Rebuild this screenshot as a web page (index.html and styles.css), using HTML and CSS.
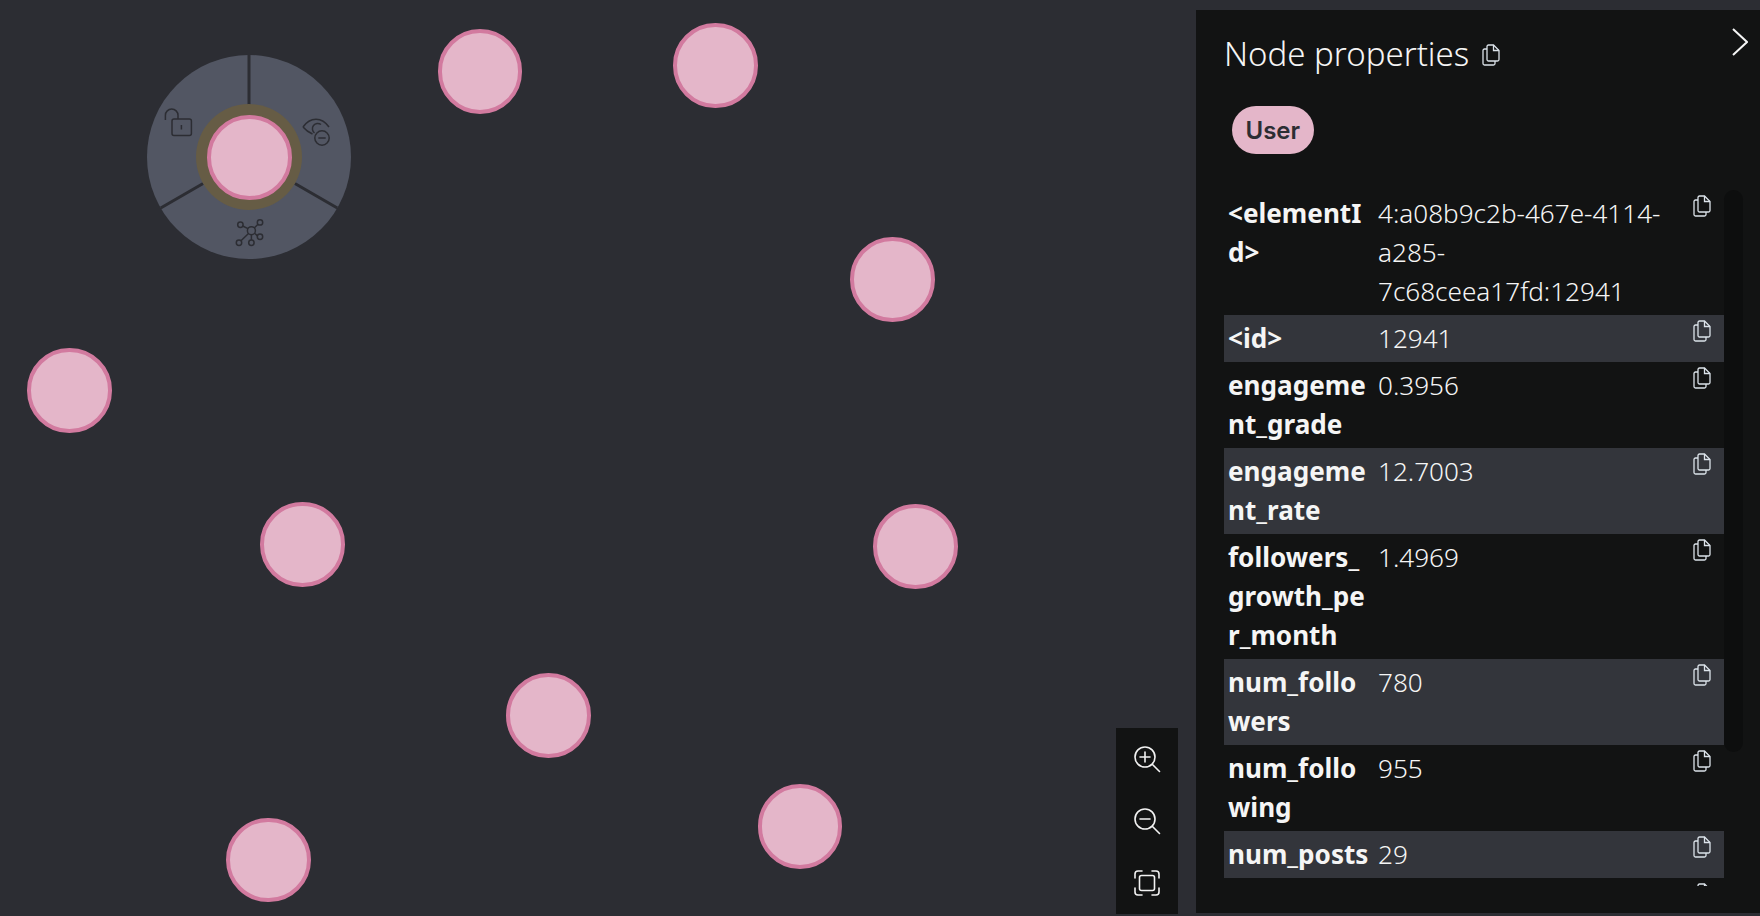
FILE: index.html
```html
<!DOCTYPE html>
<html lang="en">
<head>
    <meta charset="UTF-8">
    <title>Node properties</title>
    <link rel="stylesheet" href="styles.css">
</head>
<body>
    <svg width="0" height="0" class="defs">
        <symbol id="copy" viewBox="0 0 18 22">
            <path d="M6.5 1H11.5L17 6.5V15.5A1.5 1.5 0 0 1 15.5 17H6.5A1.5 1.5 0 0 1 5 15.5V2.5A1.5 1.5 0 0 1 6.5 1Z"/>
            <path d="M11.5 1V6.5H17"/>
            <path d="M5 5H2.5A1.5 1.5 0 0 0 1 6.5V19.5A1.5 1.5 0 0 0 2.5 21H11.5A1.5 1.5 0 0 0 13 19.5V17"/>
        </symbol>
    </svg>

    <main class="canvas">
        <svg class="node-menu" width="204" height="204" viewBox="0 0 204 204">
            <circle class="menu-disc" cx="102" cy="102" r="102"/>
            <path class="menu-split" d="M102 0V52M190.3 153L147.9 128.5M13.7 153L56.1 128.5"/>
            <circle class="menu-ring" cx="102" cy="102" r="53"/>
            <g class="menu-icon">
                <rect x="25" y="64" width="19.4" height="16.4" rx="2"/>
                <path d="M18.4 65V60.3A6.3 6.3 0 0 1 31 60.3V64M34.4 70V74.5"/>
                <path d="M156 72C163 61.5 175 61.5 182 72M156 72C158.5 75 162 77.5 165.5 79"/>
                <path d="M174 69.5A5.3 5.3 0 1 0 167.5 78"/>
                <circle cx="175" cy="83" r="7.2"/>
                <path d="M171.3 83H178.7"/>
                <circle cx="104.4" cy="175.7" r="4"/>
                <circle cx="93.4" cy="169.7" r="2.7"/>
                <circle cx="113" cy="167.4" r="2.7"/>
                <circle cx="113" cy="181.7" r="2.7"/>
                <circle cx="104.4" cy="187.7" r="2.7"/>
                <circle cx="92" cy="187.7" r="2.7"/>
                <path d="M95.7 171L101 173.6M111 169.3L107.2 173M110.4 180.9L108 178.5M104.4 179.7V185M94 185.8L101.5 178.5"/>
            </g>
        </svg>

        <div class="node n1"></div>
        <div class="node n2"></div>
        <div class="node n3"></div>
        <div class="node n4"></div>
        <div class="node n5"></div>
        <div class="node n6"></div>
        <div class="node n7"></div>
        <div class="node n8"></div>
        <div class="node n9"></div>
        <div class="node n10"></div>

        <div class="zoom-bar">
            <button class="zoom-btn" type="button">
                <svg width="28" height="28" viewBox="0 0 28 28"><circle cx="12" cy="12" r="10"/><path d="M19.5 19.5L26.5 26.5M7 12H17M12 7V17"/></svg>
            </button>
            <button class="zoom-btn" type="button">
                <svg width="28" height="28" viewBox="0 0 28 28"><circle cx="12" cy="12" r="10"/><path d="M19.5 19.5L26.5 26.5M7 12H17"/></svg>
            </button>
            <button class="zoom-btn" type="button">
                <svg width="26" height="26" viewBox="0 0 26 26"><rect x="5.5" y="5.5" width="15" height="15" rx="2"/><path d="M1 8V4A3 3 0 0 1 4 1H8M18 1H22A3 3 0 0 1 25 4V8M25 18V22A3 3 0 0 1 22 25H18M8 25H4A3 3 0 0 1 1 22V18"/></svg>
            </button>
        </div>
    </main>

    <aside class="panel">
        <header class="panel-head">
            <h2 class="panel-title">Node properties</h2>
            <svg class="copy copy-title"><use href="#copy"/></svg>
            <svg class="chevron" width="16" height="28" viewBox="0 0 16 28"><path d="M1 1L15 14L1 27"/></svg>
        </header>
        <div class="labels"><span class="chip">User</span></div>

        <div class="props">
            <div class="scroll-track"></div>
            <div class="row"><span class="key">&lt;elementId&gt;</span><span class="val">4:a08b9c2b-467e-4114-a285-7c68ceea17fd:12941</span><svg class="copy"><use href="#copy"/></svg></div>
            <div class="row"><span class="key">&lt;id&gt;</span><span class="val">12941</span><svg class="copy"><use href="#copy"/></svg></div>
            <div class="row"><span class="key">engagement_grade</span><span class="val">0.3956</span><svg class="copy"><use href="#copy"/></svg></div>
            <div class="row"><span class="key">engagement_rate</span><span class="val">12.7003</span><svg class="copy"><use href="#copy"/></svg></div>
            <div class="row"><span class="key">followers_growth_per_month</span><span class="val">1.4969</span><svg class="copy"><use href="#copy"/></svg></div>
            <div class="row"><span class="key">num_followers</span><span class="val">780</span><svg class="copy"><use href="#copy"/></svg></div>
            <div class="row"><span class="key">num_following</span><span class="val">955</span><svg class="copy"><use href="#copy"/></svg></div>
            <div class="row"><span class="key">num_posts</span><span class="val">29</span><svg class="copy"><use href="#copy"/></svg></div>
            <div class="row"><span class="key"></span><span class="val"></span><svg class="copy"><use href="#copy"/></svg></div>
        </div>
    </aside>
</body>
</html>
```

FILE: styles.css
```css
html, body {
    margin: 0;
    padding: 0;
    height: 100%;
    overflow: hidden;
}

body {
    background-color: #2c2d33;
    color: #f5f5f5;
    font-family: "Noto Sans", "Open Sans", sans-serif;
}

.defs {
    position: absolute;
}

.canvas {
    position: relative;
    height: 916px;
}

/* graph nodes */
.node {
    position: absolute;
    width: 84.5px;
    height: 84.5px;
    box-sizing: border-box;
    border: 4px solid #d27a9f;
    border-radius: 50%;
    background-color: #e4b6c9;
}

.n1 { left: 207px; top: 115px; }
.n2 { left: 437.5px; top: 29px; }
.n3 { left: 673px; top: 23px; }
.n4 { left: 850px; top: 237px; }
.n5 { left: 27px; top: 348px; }
.n6 { left: 260px; top: 502px; }
.n7 { left: 873px; top: 504px; }
.n8 { left: 506px; top: 673px; }
.n9 { left: 757.5px; top: 784px; }
.n10 { left: 226px; top: 817.5px; }

.node-menu {
    position: absolute;
    left: 147px;
    top: 55px;
}

.menu-disc {
    fill: #525663;
}

.menu-split {
    stroke: #2c2d33;
    stroke-width: 3;
    fill: none;
}

.menu-ring {
    fill: #665c45;
}

.menu-icon * {
    fill: none;
    stroke: #2c2d33;
    stroke-width: 1.5;
}

/* zoom controls */
.zoom-bar {
    position: absolute;
    left: 1116px;
    top: 728px;
    width: 62px;
    display: flex;
    flex-direction: column;
    background-color: #121313;
}

.zoom-btn {
    height: 62px;
    padding: 0;
    border: none;
    background: none;
    display: flex;
    align-items: center;
    justify-content: center;
}

.zoom-btn svg {
    fill: none;
    stroke: #f2f2f2;
    stroke-width: 1.6;
    stroke-linecap: round;
}

/* side panel */
.panel {
    position: absolute;
    left: 1196px;
    top: 10px;
    right: 0;
    bottom: 3px;
    padding-left: 28px;
    background-color: #121313;
}

.panel-head {
    position: relative;
    display: flex;
    align-items: center;
    height: 78px;
    padding-top: 9px;
    box-sizing: border-box;
}

.panel-title {
    margin: 0 13px 0 0;
    font-size: 33px;
    font-weight: 300;
    line-height: 44px;
}

.chevron {
    position: absolute;
    right: 12px;
    top: 18px;
    fill: none;
    stroke: #f5f5f5;
    stroke-width: 2;
}

.labels {
    padding: 18px 0 0 8px;
    height: 102px;
    box-sizing: border-box;
}

.chip {
    display: inline-block;
    height: 48px;
    padding: 0 13.5px;
    border-radius: 24px;
    background-color: #e4b6c9;
    color: #2c2d33;
    font-family: Inter, "Liberation Sans", sans-serif;
    font-size: 24px;
    font-weight: 600;
    line-height: 49px;
}

.props {
    position: relative;
    width: 520px;
    height: 695.6px;
    overflow: hidden;
}

.scroll-track {
    position: absolute;
    left: 500px;
    top: 0;
    width: 19px;
    height: 562px;
    border-radius: 10px;
    background-color: #0d0e0e;
}

.row {
    display: grid;
    grid-template-columns: 154px 1fr 31px;
    width: 500px;
    box-sizing: border-box;
    font-size: 26.1px;
    line-height: 39.3px;
}

.row:nth-child(odd) {
    background-color: #33353b;
}

.key {
    padding: 3.7px 8px 3.7px 4px;
    font-weight: 700;
    word-break: break-all;
}

.val {
    padding: 3.7px 15px 3.7px 0;
    font-weight: 300;
}

.copy {
    display: block;
    width: 18px;
    height: 22px;
    fill: none;
    stroke: #dce3ea;
    stroke-width: 1.3;
}

.row .copy {
    margin-top: 5px;
}

.copy-title {
    flex: none;
    margin-top: 2px;
}
```
